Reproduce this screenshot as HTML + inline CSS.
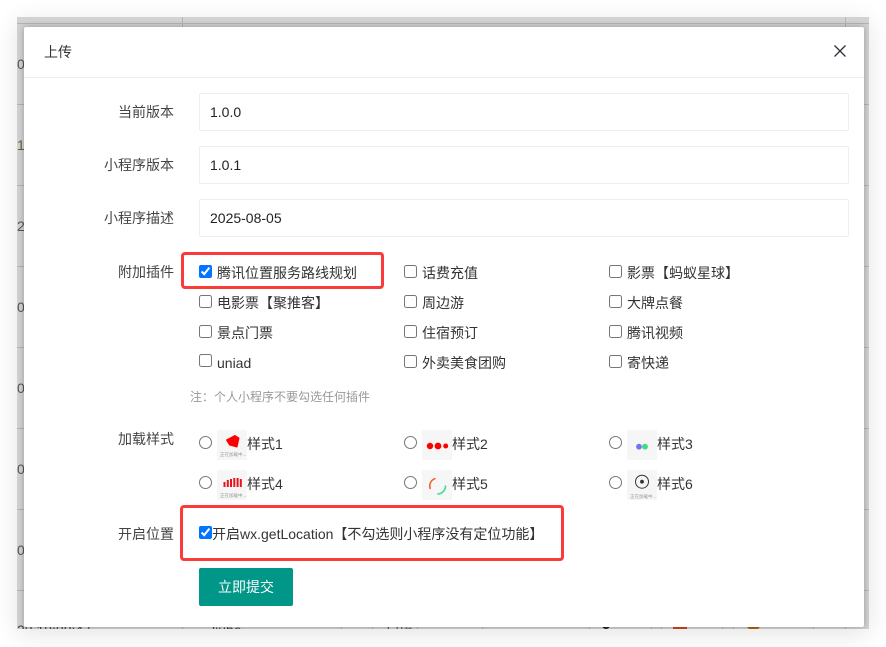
<!DOCTYPE html>
<html lang="zh">
<head>
<meta charset="utf-8">
<title>上传</title>
<style>
html,body{margin:0;padding:0;width:886px;height:647px;overflow:hidden;background:#fff;font-family:"Liberation Sans","Noto Sans CJK SC",sans-serif;color:#333;font-size:14px}
.a{position:absolute;white-space:nowrap}
#back{position:absolute;left:17px;top:17px;width:852px;height:612px;background:#d2d2d2;box-shadow:0 5px 24px rgba(0,0,0,.11);overflow:hidden}
#back i{position:absolute;background:#b4b4b4}
#back b{position:absolute;font-weight:normal;white-space:nowrap;color:#555;line-height:18px}
#modal{position:absolute;left:7px;top:10px;width:840px;height:600px;background:#fff;border-radius:2px;box-shadow:0 0 7px rgba(0,0,0,.28)}
.hr{position:absolute;left:24px;top:77px;width:840px;height:1px;background:#eee}
.lbl{position:absolute;left:24px;width:150px;text-align:right;line-height:20px;color:#444;white-space:nowrap}
.inp{position:absolute;left:199px;width:638px;height:36px;border:1px solid #eee;border-radius:2px;padding-left:10px;line-height:36px;color:#222;background:#fff}
.c{position:absolute;white-space:nowrap;line-height:20px;color:#333}
input{position:absolute;margin:0;width:13px;height:13px}
.th{position:absolute;width:30px;height:30px;background:#f6f6f6;overflow:hidden}
.th svg{display:block}
.th text{font-size:4.5px;fill:#999;font-family:"Liberation Sans","Noto Sans CJK SC",sans-serif}
.red{position:absolute;border:3px solid #fb3a3a;border-radius:4px;box-sizing:border-box}
</style>
</head>
<body>
<div id="back">
<i style="left:0;top:6px;width:852px;height:1px"></i>
<i style="left:165px;top:0;width:1px;height:10px"></i>
<i style="left:828px;top:0;width:1px;height:10px"></i>
<i style="left:0;top:87px;width:7px;height:1px"></i>
<i style="left:847px;top:87px;width:5px;height:1px"></i>
<i style="left:0;top:168px;width:7px;height:1px"></i>
<i style="left:847px;top:168px;width:5px;height:1px"></i>
<i style="left:0;top:249px;width:7px;height:1px"></i>
<i style="left:847px;top:249px;width:5px;height:1px"></i>
<i style="left:0;top:330px;width:7px;height:1px"></i>
<i style="left:847px;top:330px;width:5px;height:1px"></i>
<i style="left:0;top:411px;width:7px;height:1px"></i>
<i style="left:847px;top:411px;width:5px;height:1px"></i>
<i style="left:0;top:492px;width:7px;height:1px"></i>
<i style="left:847px;top:492px;width:5px;height:1px"></i>
<i style="left:0;top:573px;width:7px;height:1px"></i>
<i style="left:847px;top:573px;width:5px;height:1px"></i>
<i style="left:165px;top:600px;width:1px;height:12px"></i>
<i style="left:324px;top:600px;width:1px;height:12px"></i>
<i style="left:355px;top:600px;width:1px;height:12px"></i>
<i style="left:400px;top:600px;width:1px;height:12px"></i>
<i style="left:465px;top:600px;width:1px;height:12px"></i>
<i style="left:572px;top:600px;width:1px;height:12px"></i>
<i style="left:634px;top:600px;width:1px;height:12px"></i>
<i style="left:644px;top:600px;width:1px;height:12px"></i>
<i style="left:705px;top:600px;width:1px;height:12px"></i>
<i style="left:716px;top:600px;width:1px;height:12px"></i>
<i style="left:796px;top:600px;width:1px;height:12px"></i>
<i style="left:828px;top:600px;width:1px;height:12px"></i>
<b style="left:0;top:38px">0</b>
<b style="left:0;top:119px;color:#6b5a3a">1</b>
<b style="left:0;top:200px">2</b>
<b style="left:0;top:281px">0</b>
<b style="left:0;top:362px">0</b>
<b style="left:0;top:443px">0</b>
<b style="left:0;top:524px">0</b>
<b style="left:0;top:604px;color:#444">20 10:00:47</b>
<b style="left:195px;top:604px;color:#444">liuhe</b>
<b style="left:368px;top:604px;color:#444">扫描</b>
<div class="a" style="left:585px;top:608px;width:8px;height:4px;background:#222;border-radius:0 0 4px 4px"></div>
<div class="a" style="left:656px;top:610px;width:14px;height:2px;background:#c8481a"></div>
<div class="a" style="left:730px;top:609px;width:13px;height:3px;background:#b5600f;border-radius:0 0 7px 7px"></div>
<div id="modal"></div>
</div>

<div class="a" style="left:44px;top:42px;line-height:20px;color:#333">上传</div>
<svg class="a" style="left:832px;top:43px" width="16" height="16" viewBox="0 0 16 16"><path d="M2.5 2.5L13.5 13.5M13.5 2.5L2.5 13.5" stroke="#2f2f3a" stroke-width="1.3" fill="none"/></svg>
<div class="hr"></div>

<div class="lbl" style="top:102px">当前版本</div>
<div class="inp" style="top:93px">1.0.0</div>
<div class="lbl" style="top:155px">小程序版本</div>
<div class="inp" style="top:146px">1.0.1</div>
<div class="lbl" style="top:208px">小程序描述</div>
<div class="inp" style="top:199px">2025-08-05</div>

<div class="lbl" style="top:262px">附加插件</div>
<div class="red" style="left:181px;top:252px;width:203px;height:37px"></div>

<input type="checkbox" checked style="left:199px;top:265px"><div class="c" style="left:217px;top:263px">腾讯位置服务路线规划</div>
<input type="checkbox" style="left:404px;top:265px"><div class="c" style="left:422px;top:263px">话费充值</div>
<input type="checkbox" style="left:609px;top:265px"><div class="c" style="left:627px;top:263px">影票【蚂蚁星球】</div>

<input type="checkbox" style="left:199px;top:295px"><div class="c" style="left:217px;top:293px">电影票【聚推客】</div>
<input type="checkbox" style="left:404px;top:295px"><div class="c" style="left:422px;top:293px">周边游</div>
<input type="checkbox" style="left:609px;top:295px"><div class="c" style="left:627px;top:293px">大牌点餐</div>

<input type="checkbox" style="left:199px;top:325px"><div class="c" style="left:217px;top:323px">景点门票</div>
<input type="checkbox" style="left:404px;top:325px"><div class="c" style="left:422px;top:323px">住宿预订</div>
<input type="checkbox" style="left:609px;top:325px"><div class="c" style="left:627px;top:323px">腾讯视频</div>

<input type="checkbox" style="left:199px;top:354px"><div class="c" style="left:217px;top:353px">uniad</div>
<input type="checkbox" style="left:404px;top:355px"><div class="c" style="left:422px;top:353px">外卖美食团购</div>
<input type="checkbox" style="left:609px;top:355px"><div class="c" style="left:627px;top:353px">寄快递</div>

<div class="c" style="left:190px;top:387px;font-size:12px;color:#999">注：个人小程序不要勾选任何插件</div>

<div class="lbl" style="top:429px">加载样式</div>

<input type="radio" style="left:199px;top:436px">
<div class="th" style="left:217px;top:430px"><svg width="30" height="30"><path d="M18 5.5L9.5 10L12.5 15L20 17L22 8Z" fill="#f00" stroke="#f00" stroke-width="1" stroke-linejoin="round"/><text x="3" y="26">正在加载中...</text></svg></div>
<div class="c" style="left:247px;top:434px">样式1</div>
<input type="radio" style="left:404px;top:436px">
<div class="th" style="left:422px;top:430px"><svg width="30" height="30"><circle cx="8" cy="16" r="3.2" fill="#f00"/><circle cx="16" cy="16" r="3.4" fill="#f00"/><circle cx="23.7" cy="16" r="2.5" fill="#f00"/></svg></div>
<div class="c" style="left:452px;top:434px">样式2</div>
<input type="radio" style="left:609px;top:436px">
<div class="th" style="left:627px;top:430px"><svg width="30" height="30"><circle cx="12" cy="16.7" r="2.9" fill="#7373f5"/><circle cx="18" cy="16.7" r="2.9" fill="#3ddc84"/></svg></div>
<div class="c" style="left:657px;top:434px">样式3</div>

<input type="radio" style="left:199px;top:476px">
<div class="th" style="left:217px;top:470px"><svg width="30" height="30"><g fill="#e8141c"><rect x="6.5" y="12" width="2" height="5"/><rect x="9.8" y="10" width="2" height="7"/><rect x="13" y="9" width="2" height="8"/><rect x="16.3" y="8" width="2" height="9"/><rect x="19.6" y="8" width="2" height="9"/><rect x="22.8" y="9" width="2" height="8"/></g><text x="3" y="27">正在加载中...</text></svg></div>
<div class="c" style="left:247px;top:474px">样式4</div>
<input type="radio" style="left:404px;top:476px">
<div class="th" style="left:422px;top:470px"><svg width="30" height="30" fill="none" stroke-width="1.6"><path d="M13.5 8.4A8 8 0 0 0 8.3 19" stroke="#f0642c"/><path d="M23.5 15.5A8 8 0 0 1 15.3 24" stroke="#3ddc97"/></svg></div>
<div class="c" style="left:452px;top:474px">样式5</div>
<input type="radio" style="left:609px;top:476px">
<div class="th" style="left:627px;top:470px"><svg width="30" height="30"><circle cx="15" cy="11.7" r="6.5" fill="none" stroke="#333" stroke-width="1"/><circle cx="15" cy="11.7" r="1.9" fill="#333"/><text x="3" y="28">正在加载中...</text></svg></div>
<div class="c" style="left:657px;top:474px">样式6</div>

<div class="lbl" style="top:524px">开启位置</div>
<div class="red" style="left:180px;top:505px;width:384px;height:56px"></div>
<input type="checkbox" checked style="left:199px;top:526px">
<div class="c" style="left:212px;top:524px">开启wx.getLocation【不勾选则小程序没有定位功能】</div>

<div class="a" style="left:199px;top:568px;width:94px;height:38px;background:#009688;border-radius:2px;color:#fff;text-align:center;line-height:38px">立即提交</div>
</body>
</html>
